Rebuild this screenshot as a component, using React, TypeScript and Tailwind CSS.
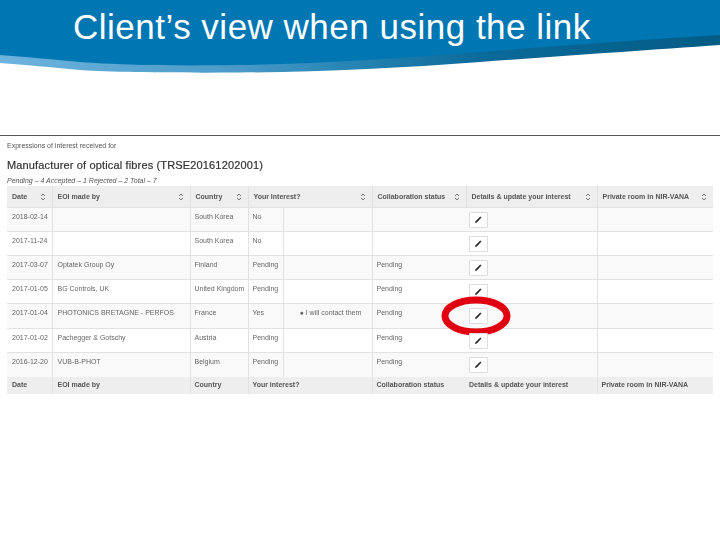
import React from "react";

const rows = [
  { d: "2018-02-14", e: "", c: "South Korea", i: "No", x: "", s: "" },
  { d: "2017-11-24", e: "", c: "South Korea", i: "No", x: "", s: "" },
  { d: "2017-03-07", e: "Optatek Group Oy", c: "Finland", i: "Pending", x: "", s: "Pending" },
  { d: "2017-01-05", e: "BG Controls, UK", c: "United Kingdom", i: "Pending", x: "", s: "Pending" },
  { d: "2017-01-04", e: "PHOTONICS BRETAGNE - PERFOS", c: "France", i: "Yes", x: "I will contact them", s: "Pending", mark: true },
  { d: "2017-01-02", e: "Pachegger & Gotschy", c: "Austria", i: "Pending", x: "", s: "Pending" },
  { d: "2016-12-20", e: "VUB-B-PHOT", c: "Belgium", i: "Pending", x: "", s: "Pending", tall: true },
];

const heads = [
  { t: "Date", span: 1 },
  { t: "EOI made by", span: 1 },
  { t: "Country", span: 1 },
  { t: "Your Interest?", span: 2 },
  { t: "Collaboration status", span: 1 },
  { t: "Details & update your interest", span: 1 },
  { t: "Private room in NIR-VANA", span: 1 },
];

const foot = ["Date", "EOI made by", "Country", "Your interest?", "Collaboration status", "Details & update your interest", "Private room in NIR-VANA"];

function Sort() {
  return (
    <svg width="6" height="8" viewBox="0 0 6 8" className="shrink-0" fill="none" stroke="#777" strokeWidth="1">
      <path d="M1 3 L3 1 L5 3" />
      <path d="M1 5 L3 7 L5 5" />
    </svg>
  );
}

function EditButton() {
  return (
    <div className="w-[19px] h-[16px] bg-white border border-[#dddddd] rounded-[1px] flex items-center justify-center">
      <svg width="9" height="9" viewBox="0 0 9 9" fill="none">
        <path d="M1 8 L1.6 6.2 L6.4 1.6 L7.4 2.6 L2.8 7.4 Z" fill="#222" />
      </svg>
    </div>
  );
}

export default function App() {
  return (
    <div className="relative w-[720px] h-[540px] bg-white overflow-hidden font-['Liberation_Sans',Arial,sans-serif]">
      <svg className="absolute left-0 top-0" width="720" height="80" viewBox="0 0 720 80">
        <defs>
          <linearGradient id="band" x1="0" x2="1" y1="0" y2="0">
            <stop offset="0" stopColor="#6db3dd" />
            <stop offset="0.33" stopColor="#4a9ac8" />
            <stop offset="0.47" stopColor="#2a87b5" />
            <stop offset="0.67" stopColor="#0a6a9a" />
            <stop offset="1" stopColor="#045c85" />
          </linearGradient>
        </defs>
        <path d="M0 30 H720 V45 C650 50 560 56 480 62 C400 68 320 72 240 72.5 C170 73 100 72 80 70 C50 67 25 65 0 63 Z" fill="url(#band)" />
        <path d="M0 0 H720 V35 C650 39 560 46 480 52 C400 58 320 64 240 65 C170 66 120 65 80 62 C50 59 25 57 0 55 Z" fill="#0076b3" />
      </svg>

      <div className="relative h-[135px]">
        <h1 className="pl-[73px] pt-[5px] text-[35px] leading-[44px] tracking-[0.5px] font-normal text-white">Client’s view when using the link</h1>
      </div>

      <div className="h-[51px] border-t border-[#555555] relative">
        <div className="pl-[7px] pt-[5px] text-[7px] leading-[9px] text-[#555555] blur-[0.3px]">Expressions of interest received for</div>
        <div className="pl-[7px] pt-[8px] text-[11px] leading-[14px] font-normal text-[#333333] tracking-[0.15px] blur-[0.2px] [-webkit-text-stroke:0.2px_#333333]">Manufacturer of optical fibres (TRSE20161202001)</div>
        <div className="pl-[7px] pt-[4px] text-[7px] leading-[9px] italic text-[#555555] blur-[0.3px]">Pending – 4 Accepted – 1 Rejected – 2 Total – 7</div>
      </div>

      <table className="ml-[7px] w-[706px] table-fixed border-collapse text-[7px] text-[#666666]">
        <colgroup>
          <col className="w-[45px]" />
          <col className="w-[138px]" />
          <col className="w-[58px]" />
          <col className="w-[35px]" />
          <col className="w-[89px]" />
          <col className="w-[94px]" />
          <col className="w-[131px]" />
          <col className="w-[116px]" />
        </colgroup>
        <thead>
          <tr className="h-[21px] bg-[#eeeeee]">
            {heads.map((h) => (
              <th key={h.t} colSpan={h.span} className="font-bold text-left align-middle pt-[1px] px-[5px] border-l first:border-l-0 border-[#e2e2e2] text-[#555555] blur-[0.3px]">
                <div className="flex items-center justify-between pr-[1px] whitespace-nowrap">
                  <span>{h.t}</span>
                  <Sort />
                </div>
              </th>
            ))}
          </tr>
        </thead>
        <tbody>
          {rows.map((r, n) => (
            <tr key={r.d} className={`${r.mark || r.tall ? "h-[25px]" : "h-[24px]"} border-t border-[#e2e2e2] ${n % 2 === 0 ? "bg-[#f9f9f9]" : "bg-white"}`}>
              <td className="align-top pt-[4px] pl-[5px] leading-[9px] whitespace-nowrap blur-[0.3px]">{r.d}</td>
              <td className="align-top pt-[4px] pl-[5px] leading-[9px] whitespace-nowrap border-l border-[#e2e2e2] blur-[0.3px]">{r.e}</td>
              <td className="align-top pt-[4px] pl-[4px] leading-[9px] whitespace-nowrap border-l border-[#e2e2e2] blur-[0.3px]">{r.c}</td>
              <td className="align-top pt-[4px] pl-[4px] leading-[9px] whitespace-nowrap border-l border-[#e2e2e2] blur-[0.3px]">{r.i}</td>
              <td className="align-top pt-[4px] pl-[16px] leading-[9px] whitespace-nowrap border-l border-[#e2e2e2] blur-[0.3px]">
                {r.x ? <span>● {r.x}</span> : null}
              </td>
              <td className="align-top pt-[4px] pl-[4px] leading-[9px] whitespace-nowrap border-l border-[#e2e2e2] blur-[0.3px]">{r.s}</td>
              <td className="align-top pt-[4px] pl-[3px] relative">
                <EditButton />
                {r.mark ? (
                  <svg className="absolute left-[-26px] top-[-9px] pointer-events-none" width="72" height="42" viewBox="0 0 72 42" fill="none">
                    <ellipse cx="36" cy="21" rx="31" ry="16" stroke="#e1000f" strokeWidth="7" />
                  </svg>
                ) : null}
              </td>
              <td className="border-l border-[#e2e2e2]" />
            </tr>
          ))}
          <tr className="h-[17px] bg-[#eeeeee] font-bold text-[#555555]">
            <td className="pl-[5px] blur-[0.3px]">{foot[0]}</td>
            <td className="pl-[5px] border-l border-[#e2e2e2] blur-[0.3px]">{foot[1]}</td>
            <td className="pl-[4px] border-l border-[#e2e2e2] blur-[0.3px]">{foot[2]}</td>
            <td colSpan={2} className="pl-[4px] border-l border-[#e2e2e2] blur-[0.3px]">{foot[3]}</td>
            <td className="pl-[4px] border-l border-[#e2e2e2] whitespace-nowrap blur-[0.3px]">{foot[4]}</td>
            <td className="pl-[3px] whitespace-nowrap blur-[0.3px]">{foot[5]}</td>
            <td className="pl-[4px] border-l border-[#e2e2e2] whitespace-nowrap blur-[0.3px]">{foot[6]}</td>
          </tr>
        </tbody>
      </table>
    </div>
  );
}
